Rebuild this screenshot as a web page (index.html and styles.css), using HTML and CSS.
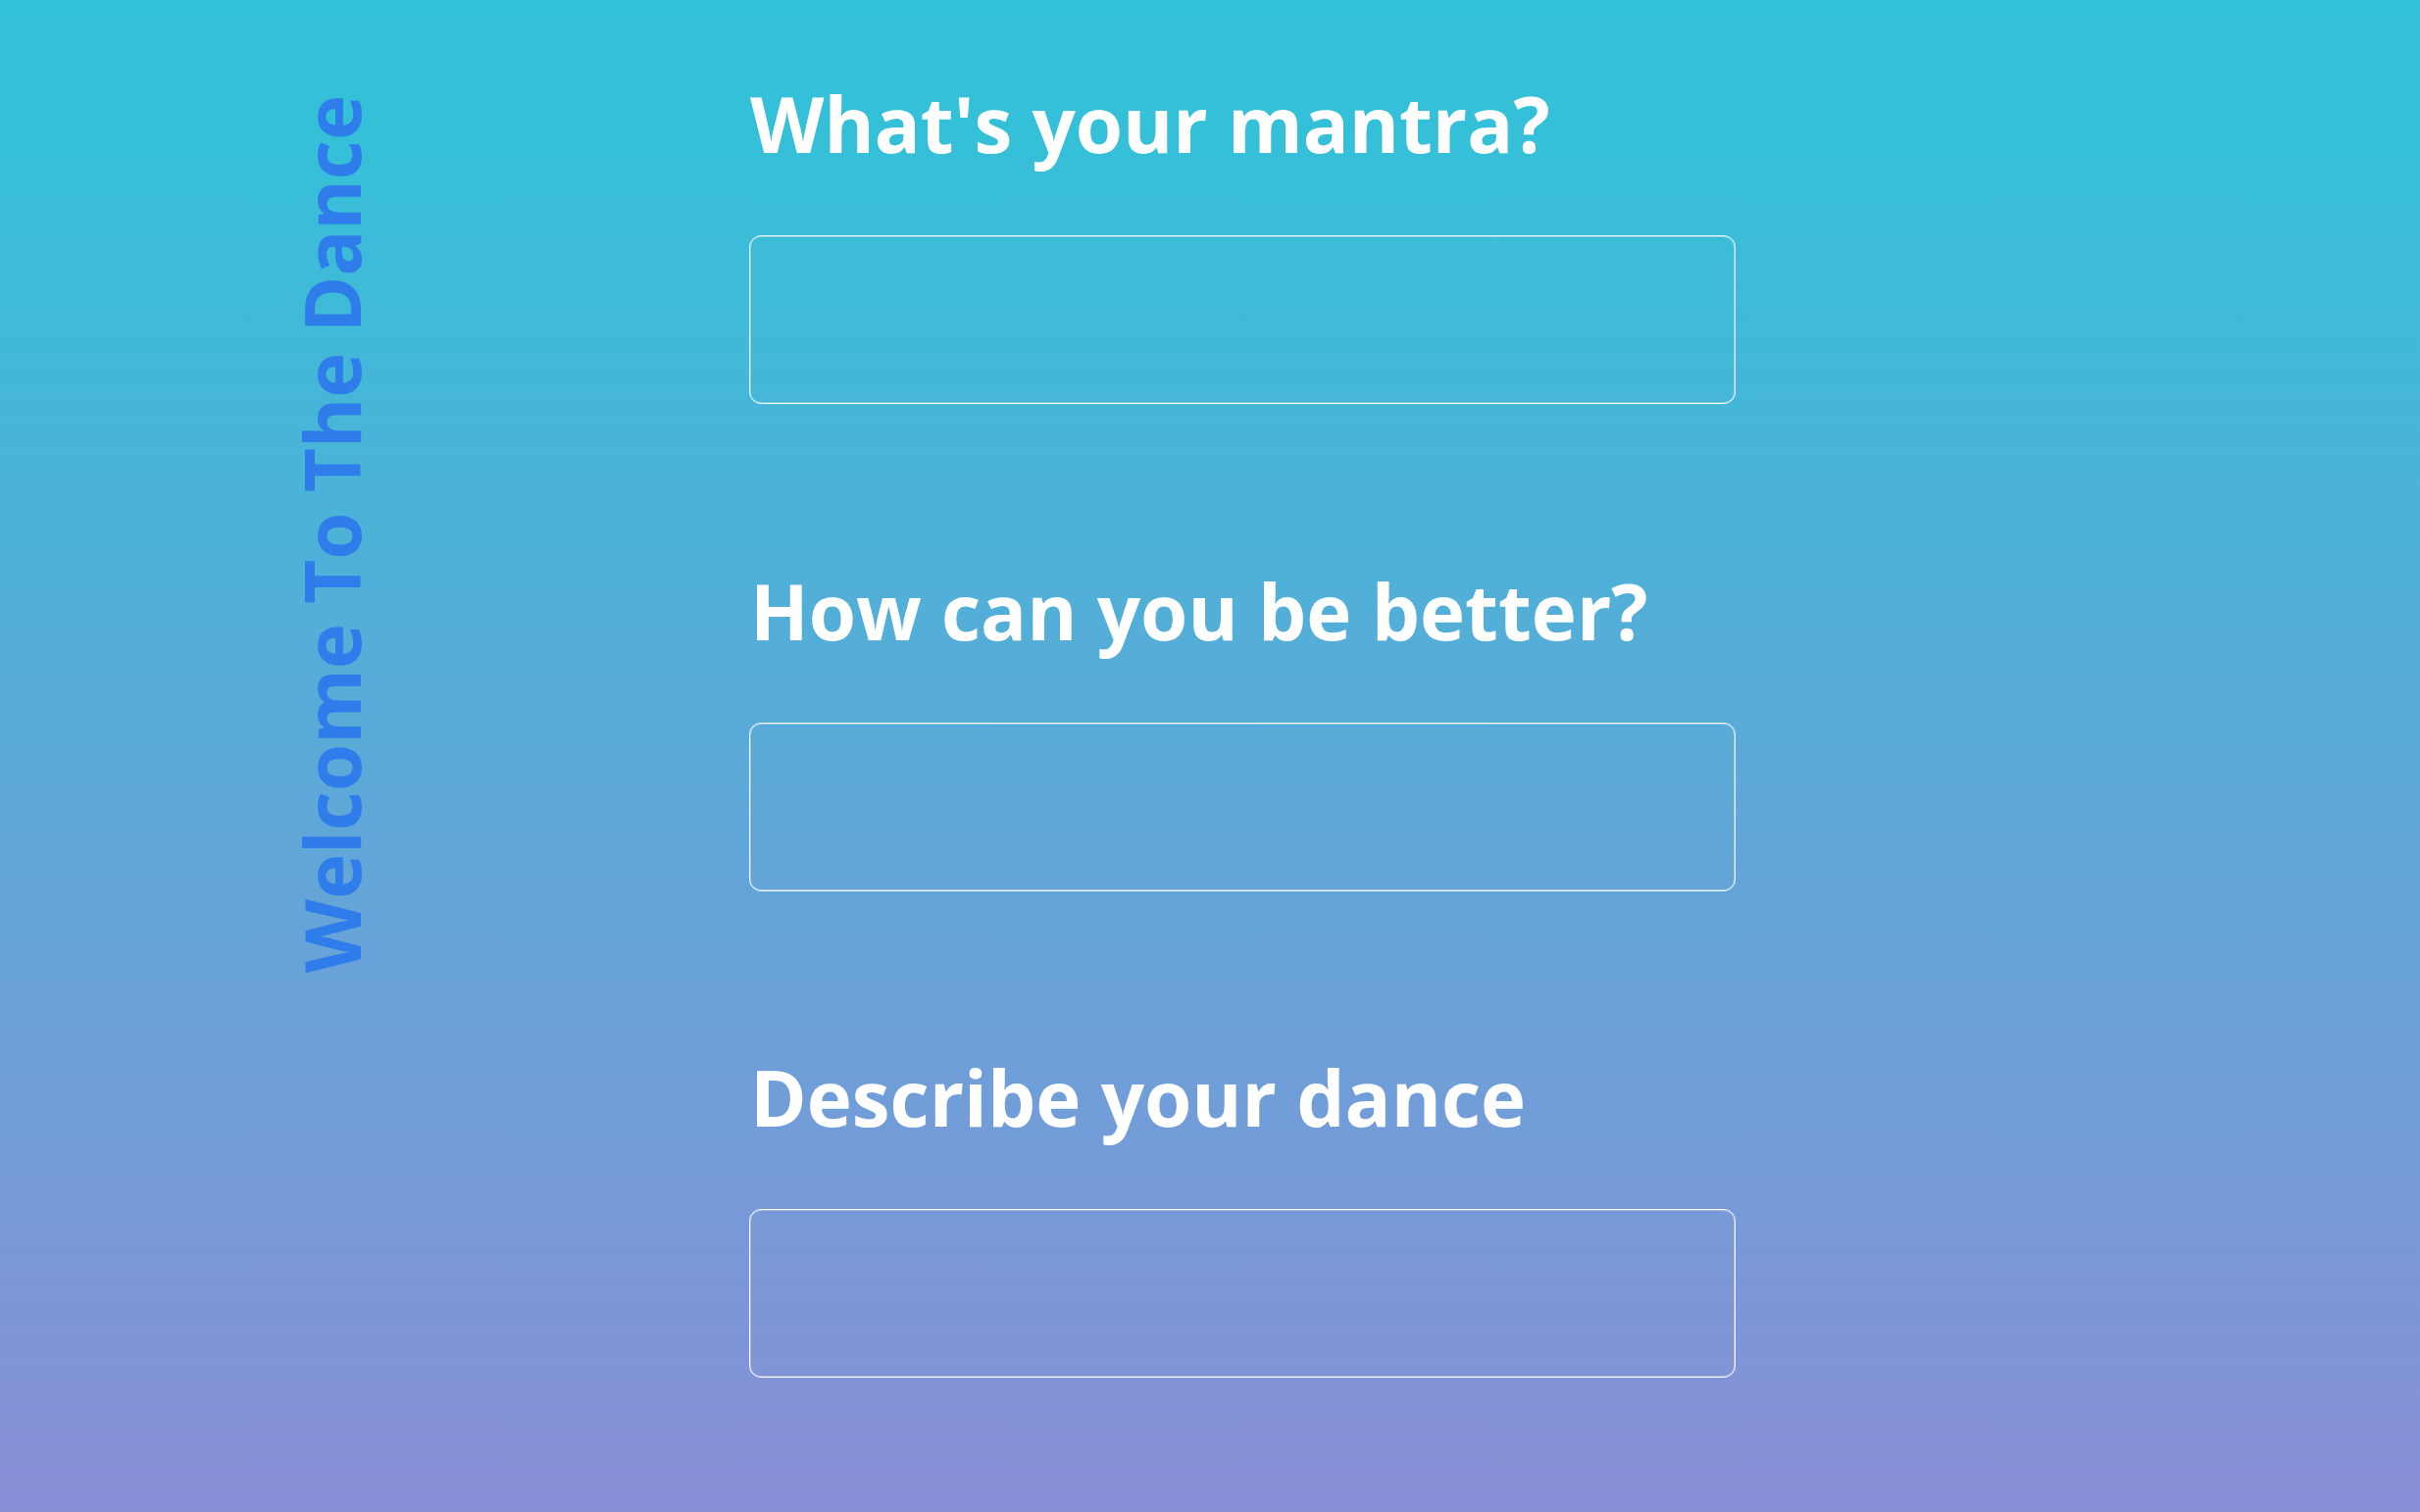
FILE: index.html
```html
<!DOCTYPE html>
<html lang="en">
<head>
<meta charset="utf-8">
<title>Welcome To The Dance</title>
<link rel="stylesheet" href="styles.css">
</head>
<body>
<div class="page">
  <aside class="side">
    <h1 class="side-title">Welcome To The Dance</h1>
  </aside>
  <form class="form">
    <div class="field">
      <label class="label" for="mantra">What's your mantra?</label>
      <input class="input" id="mantra" type="text">
    </div>
    <div class="field">
      <label class="label" for="better">How can you be better?</label>
      <input class="input" id="better" type="text">
    </div>
    <div class="field">
      <label class="label" for="dance">Describe your dance</label>
      <input class="input" id="dance" type="text">
    </div>
  </form>
</div>
</body>
</html>
```
FILE: styles.css
```css
html, body {
  margin: 0;
  padding: 0;
}
body {
  width: 2468px;
  height: 1542px;
  overflow: hidden;
  font-family: "Open Sans", "Noto Sans", sans-serif;
  background: linear-gradient(to bottom, #33c1d8 0%, #34c0d8 8%, #8a8fd8 100%);
}
.page {
  display: flex;
  height: 1542px;
}
.side {
  width: 391px;
  flex: none;
  display: flex;
  flex-direction: column;
  align-items: flex-end;
  padding-top: 97px;
}
.side-title {
  margin: 0;
  writing-mode: vertical-rl;
  transform: rotate(180deg);
  font-size: 78px;
  font-weight: 700;
  line-height: normal;
  color: #2e7deb;
  white-space: nowrap;
}
.form {
  margin-left: 373px;
  padding-top: 73px;
  display: flex;
  flex-direction: column;
}
.field {
  display: flex;
  flex-direction: column;
  margin-bottom: 157.5px;
}
.label {
  font-size: 78px;
  font-weight: 700;
  line-height: normal;
  color: #ffffff;
  margin-left: 1px;
}
.input {
  margin-top: 61px;
  width: 1006px;
  height: 172px;
  box-sizing: border-box;
  border: 1px solid #ffffff;
  box-shadow: inset 0 0 0 1px rgba(255, 255, 255, 0.3);
  border-radius: 12px;
  background: transparent;
  outline: none;
  padding: 0 20px;
  font: inherit;
  color: #ffffff;
}
```
